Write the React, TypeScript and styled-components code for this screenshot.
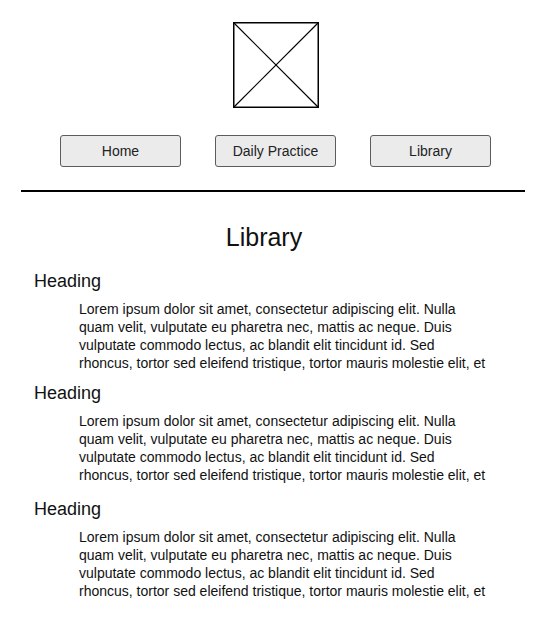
import React from "react";
import styled, { createGlobalStyle } from "styled-components";

const GlobalStyle = createGlobalStyle`
  html, body {
    margin: 0;
    padding: 0;
    background: #ffffff;
  }
  body {
    font-family: "Liberation Sans", Arial, sans-serif;
    color: #111111;
  }
`;

const Page = styled.div`
  width: 546px;
  min-height: 631px;
  background: #ffffff;
`;

const Header = styled.header`
  display: flex;
  flex-direction: column;
  align-items: center;
  padding: 22px 0 0 5px;
`;

const LogoBox = styled.svg`
  display: block;
  width: 86px;
  height: 86px;
`;

const Nav = styled.nav`
  display: flex;
  gap: 34px;
  margin-top: 27px;
`;

const NavButton = styled.button`
  width: 121px;
  height: 32px;
  box-sizing: border-box;
  border: 1px solid #5c5c5c;
  border-radius: 3px;
  background: #ebebeb;
  color: #222222;
  font-family: "Liberation Sans", Arial, sans-serif;
  font-size: 14px;
  line-height: 16px;
  padding: 0;
  cursor: pointer;
`;

const Divider = styled.hr`
  margin: 23px 21px 0 21px;
  border: none;
  height: 2px;
  background: #000000;
`;

const Content = styled.main`
  padding: 0 52px 0 34px;
`;

const Title = styled.h1`
  margin: 30px 0 0 0;
  text-align: center;
  font-size: 25px;
  line-height: 30px;
  font-weight: normal;
  color: #111111;
`;

const Section = styled.section<{ $top: number }>`
  margin-top: ${(p) => p.$top}px;
`;

const Heading = styled.h2`
  margin: 0;
  font-size: 18px;
  line-height: 22px;
  font-weight: normal;
  color: #111111;
`;

const Body = styled.p`
  margin: 8px 0 0 45px;
  width: 410px;
  min-height: 72px;
  font-size: 14px;
  line-height: 18px;
  color: #111111;
`;

const lorem =
  "Lorem ipsum dolor sit amet, consectetur adipiscing elit. Nulla quam velit, vulputate eu pharetra nec, mattis ac neque. Duis vulputate commodo lectus, ac blandit elit tincidunt id. Sed rhoncus, tortor sed eleifend tristique, tortor mauris molestie elit, et";

const sections = [
  { top: 18, heading: "Heading" },
  { top: 10, heading: "Heading" },
  { top: 14, heading: "Heading" },
];

export default function App() {
  return (
    <>
      <GlobalStyle />
      <Page>
        <Header>
          <LogoBox viewBox="0 0 86 86" aria-label="image placeholder">
            <rect x="0.75" y="0.75" width="84.5" height="84.5" fill="#fff" stroke="#000" strokeWidth="1.5" />
            <line x1="1" y1="1" x2="85" y2="85" stroke="#000" strokeWidth="1.2" />
            <line x1="85" y1="1" x2="1" y2="85" stroke="#000" strokeWidth="1.2" />
          </LogoBox>
          <Nav>
            <NavButton>Home</NavButton>
            <NavButton>Daily Practice</NavButton>
            <NavButton>Library</NavButton>
          </Nav>
        </Header>
        <Divider />
        <Content>
          <Title>Library</Title>
          {sections.map((s, i) => (
            <Section key={i} $top={s.top}>
              <Heading>{s.heading}</Heading>
              <Body>{lorem}</Body>
            </Section>
          ))}
        </Content>
      </Page>
    </>
  );
}
